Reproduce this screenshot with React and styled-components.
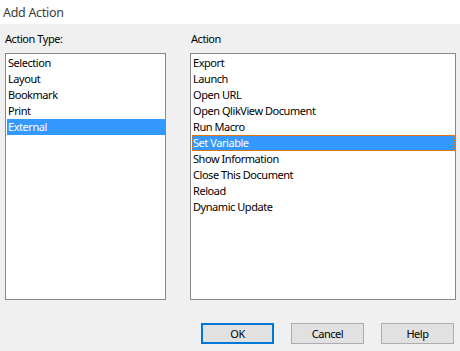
import React from 'react';
import styled, { createGlobalStyle } from 'styled-components';

const GlobalStyle = createGlobalStyle`
  html, body {
    margin: 0;
    padding: 0;
    background: #f0f0f0;
    font-family: "Noto Sans", "Open Sans", sans-serif;
    font-size: 11px;
    letter-spacing: -0.45px;
    color: #000;
  }
`;

const Dialog = styled.div`
  width: 460px;
  height: 351px;
  display: flex;
  flex-direction: column;
  background: #f0f0f0;
`;

const TitleBar = styled.div`
  height: 24px;
  background: #fff;
  padding-left: 3px;
  display: flex;
  align-items: center;
  font-size: 12.5px;
  letter-spacing: -0.3px;
  color: #3c3c3c;
`;

const Panels = styled.div`
  display: grid;
  grid-template-columns: 161px 266px;
  column-gap: 24px;
  padding: 0 5px;
`;

const Column = styled.div`
  display: flex;
  flex-direction: column;
`;

const Label = styled.div`
  padding: 7px 0 6px ${p => p.indent || 0}px;
  line-height: 16px;
  height: 16px;
`;

const List = styled.ul`
  list-style: none;
  margin: 0;
  padding: 1px 0 0 1px;
  height: 247px;
  box-sizing: border-box;
  background: #fff;
  border: 1px solid #828790;
`;

const Item = styled.li`
  height: 16px;
  line-height: 16px;
  padding-left: 1px;
  white-space: nowrap;
  background: ${p => (p.selected ? '#3399ff' : 'transparent')};
  color: ${p => (p.selected ? '#fff' : '#000')};
  outline: ${p => (p.focused ? '1px dotted #e07a10' : 'none')};
  outline-offset: -1px;
`;

const Buttons = styled.div`
  display: flex;
  justify-content: flex-end;
  gap: 17px;
  padding: 23px 6px 0 0;
`;

const Button = styled.button`
  width: 73px;
  height: 21px;
  padding: 0;
  font-family: inherit;
  font-size: 11px;
  letter-spacing: inherit;
  color: #000;
  background: #e1e1e1;
  border: ${p => (p.primary ? '2px solid #0078d7' : '1px solid #adadad')};
  box-sizing: border-box;
  outline: none;
`;

const actionTypes = ['Selection', 'Layout', 'Bookmark', 'Print', 'External'];
const actions = [
  'Export',
  'Launch',
  'Open URL',
  'Open QlikView Document',
  'Run Macro',
  'Set Variable',
  'Show Information',
  'Close This Document',
  'Reload',
  'Dynamic Update',
];

export default function App() {
  return (
    <>
      <GlobalStyle />
      <Dialog>
        <TitleBar>Add Action</TitleBar>
        <Panels>
          <Column>
            <Label>Action Type:</Label>
            <List>
              {actionTypes.map(t => (
                <Item key={t} selected={t === 'External'}>{t}</Item>
              ))}
            </List>
          </Column>
          <Column>
            <Label indent={1}>Action</Label>
            <List>
              {actions.map(a => (
                <Item key={a} selected={a === 'Set Variable'} focused={a === 'Set Variable'}>
                  {a}
                </Item>
              ))}
            </List>
          </Column>
        </Panels>
        <Buttons>
          <Button primary>OK</Button>
          <Button>Cancel</Button>
          <Button>Help</Button>
        </Buttons>
      </Dialog>
    </>
  );
}
